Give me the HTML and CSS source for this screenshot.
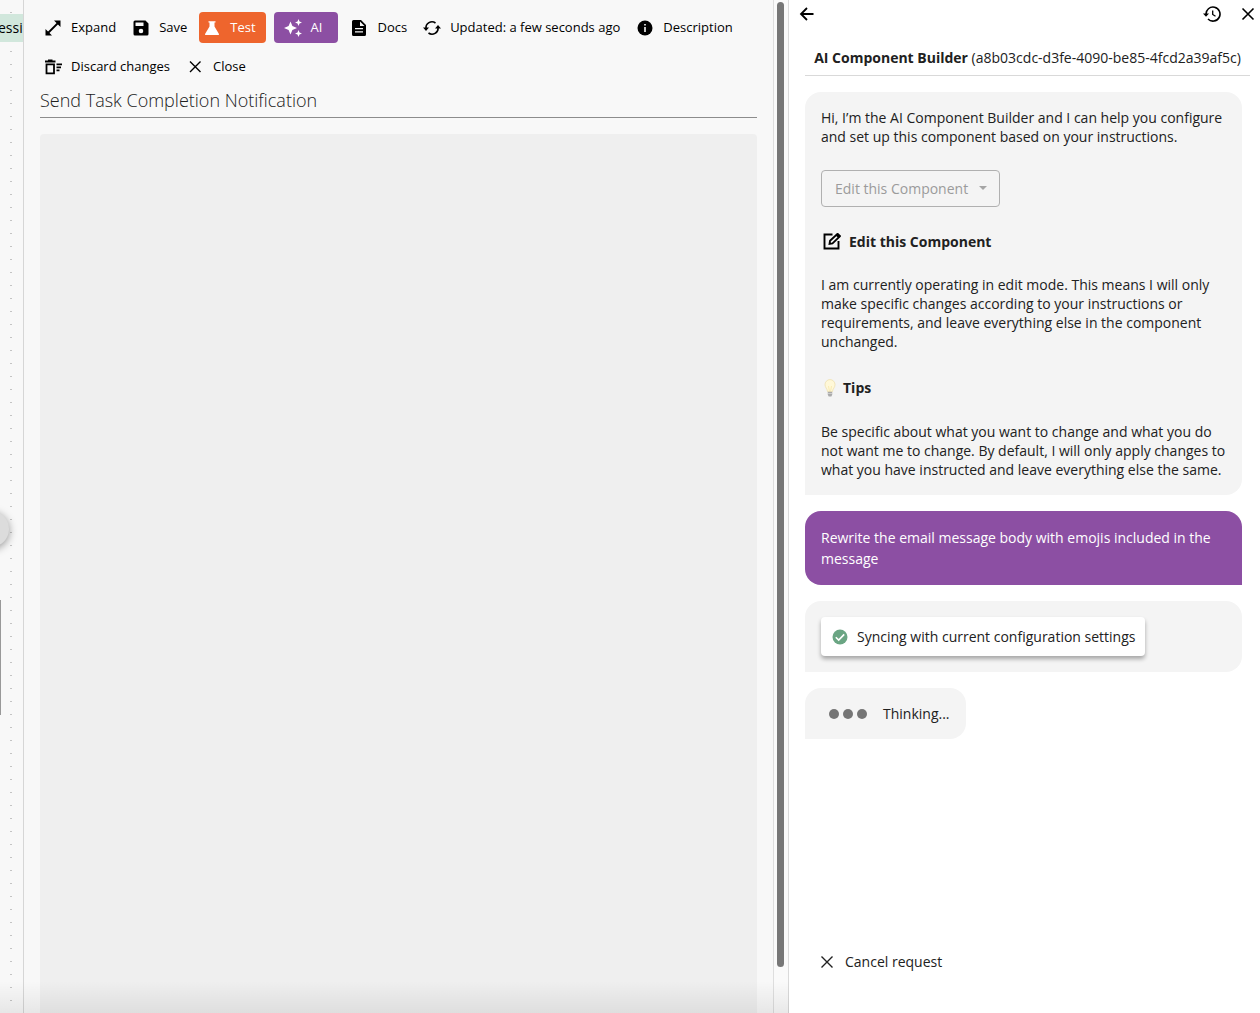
FILE: index.html
```html
<!DOCTYPE html>
<html lang="en">
<head>
<meta charset="utf-8">
<meta name="viewport" content="width=device-width, initial-scale=1">
<title>Component editor</title>
<link rel="stylesheet" href="styles.css">
</head>
<body>
<div class="app">
  <aside class="canvas" aria-label="Canvas">
    <div class="node-tag">essio</div>
    <div class="canvas-knob"></div>
    <div class="canvas-node"></div>
  </aside>

  <main class="editor">
    <div class="toolbar">
      <button class="tool" type="button">
        <svg class="icon" viewBox="0 0 18 18"><path d="M10 1.500h6.500V8zM1.500 10v6.500H8z" fill="currentColor"/><path d="M3.500 14.500l11-11" stroke="currentColor" stroke-width="1.800"/></svg>
        Expand
      </button>
      <button class="tool" type="button">
        <svg class="icon" viewBox="0 0 18 18"><path fill="currentColor" fill-rule="evenodd" d="M3 1.500h10.500l3 3v10.500a1.500 1.500 0 0 1-1.500 1.500H3a1.500 1.500 0 0 1-1.500-1.500V3A1.500 1.500 0 0 1 3 1.500zM3.500 3.500v3.500h8V3.500zM9 9.700a2.300 2.300 0 1 0 0 4.600 2.300 2.300 0 0 0 0-4.600z"/></svg>
        Save
      </button>
      <button class="tool tool-test" type="button">
        <svg class="icon" viewBox="0 0 18 18"><path fill="currentColor" d="M5.500 2.300h7v1.300h-1v4l4.300 7.100c.4.700.1 1.300-.7 1.300H2.900c-.8 0-1.100-.6-.7-1.300l4.300-7.100v-4h-1z"/></svg>
        Test
      </button>
      <button class="tool tool-ai" type="button">
        <svg class="icon" viewBox="0 0 18 18"><path fill="currentColor" d="M6.500 2.500l1.900 4.600L13 9l-4.600 1.900L6.500 15.500l-1.900-4.600L0 9l4.600-1.900zM14.500 0l1 2.500 2.500 1-2.500 1-1 2.500-1-2.500-2.500-1 2.500-1zM14.500 11l1 2.500 2.500 1-2.500 1-1 2.500-1-2.500-2.500-1 2.500-1z"/></svg>
        AI
      </button>
      <button class="tool" type="button">
        <svg class="icon" viewBox="0 0 18 18"><path fill="currentColor" fill-rule="evenodd" d="M3.500 1H11l5 5v9.500a1.500 1.500 0 0 1-1.500 1.500h-11A1.500 1.500 0 0 1 2 15.500v-13A1.500 1.500 0 0 1 3.500 1zM10 2.500V7h4.500zM5 9v1.300h8V9zM5 12.300v1.300h8v-1.300z"/></svg>
        Docs
      </button>
      <button class="tool" type="button">
        <svg class="icon" viewBox="0 0 18 18"><g fill="none" stroke="currentColor" stroke-width="1.600"><path d="M3 9.500A6 6 0 0 1 12.500 4M15 8.500A6 6 0 0 1 5.500 14"/></g><path fill="currentColor" d="M0 8.500h6L3 12zM12 9.500h6L15 6z"/></svg>
        Updated: a few seconds ago
      </button>
      <button class="tool" type="button">
        <svg class="icon" viewBox="0 0 18 18"><circle cx="9" cy="9" r="7.500" fill="currentColor"/><path d="M8.200 8h1.600v5H8.200zM8.200 5h1.600v1.600H8.200z" fill="#f8f8f8"/></svg>
        Description
      </button>
      <button class="tool" type="button">
        <svg class="icon" viewBox="0 0 18 18"><path fill="none" stroke="currentColor" stroke-width="1.800" d="M1 3.500h10.500M4 2.300h4.500M2.500 6.300h7.500v9H2.500zM12.500 6.300H18M12.500 9.300H17M12.500 12.300H15.500"/></svg>
        Discard changes
      </button>
      <button class="tool" type="button">
        <svg class="icon" viewBox="0 0 18 18"><path d="M4 3.500l10.500 10.500M14.500 3.500L4 14" stroke="currentColor" stroke-width="1.400"/></svg>
        Close
      </button>
    </div>
    <input class="component-name" type="text" aria-label="Component name" value="Send Task Completion Notification">
    <div class="component-body"></div>
  </main>

  <div class="scroll-gutter"><div class="scroll-thumb"></div></div>

  <section class="assistant">
    <header class="assistant-bar">
      <button class="icon-button" type="button" aria-label="Back">
        <svg class="icon" viewBox="0 0 18 18"><path d="M15.500 9H3M9 3L3 9l6 6" fill="none" stroke="currentColor" stroke-width="1.800"/></svg>
      </button>
      <button class="icon-button bar-end" type="button" aria-label="History">
        <svg class="icon" viewBox="0 0 18 18"><path d="M3 9.500A7 7 0 1 1 5 14" fill="none" stroke="currentColor" stroke-width="1.600"/><path d="M0 8.500h6L3 11.800z" fill="currentColor"/><path d="M9.700 5.500v4l2.800 1.700" fill="none" stroke="currentColor" stroke-width="1.300"/></svg>
      </button>
      <button class="icon-button" type="button" aria-label="Close">
        <svg class="icon" viewBox="0 0 18 18"><path d="M3.500 3.500l11 11M14.500 3.500l-11 11" stroke="currentColor" stroke-width="1.600"/></svg>
      </button>
    </header>
    <h1 class="assistant-title"><strong>AI Component Builder</strong> (a8b03cdc-d3fe-4090-be85-4fcd2a39af5c)</h1>

    <div class="messages">
      <article class="bubble intro">
        <p>Hi, I’m the AI Component Builder and I can help you configure and set up this component based on your instructions.</p>
        <div class="mode">
          <select class="mode-select" aria-label="Mode" disabled><option>Edit this Component</option></select>
          <svg class="mode-caret" viewBox="0 0 8 4"><path d="M0 0h8L4 4z" fill="currentColor"/></svg>
        </div>
        <h2 class="bubble-heading">
          <svg class="icon icon-edit" viewBox="0 0 18 18"><path d="M9.500 1.500h-8v14h14V8" fill="none" stroke="currentColor" stroke-width="1.900"/><path d="M6.500 10.800l.5-3L14.300 1l2.500 2.500-7.300 6.800z" fill="none" stroke="currentColor" stroke-width="1.800"/><path d="M12.500 2.300L15 0l3 2.800-2.500 2.500z" fill="currentColor"/></svg>
          Edit this Component
        </h2>
        <p>I am currently operating in edit mode. This means I will only make specific changes according to your instructions or requirements, and leave everything else in the component unchanged.</p>
        <h2 class="bubble-heading tips">
          <svg class="icon" viewBox="0 0 18 18"><path d="M9 .6a5 5 0 0 0-5 5.200c0 2.600 2.300 3.900 2.600 7h4.800c.3-3.100 2.600-4.400 2.600-7A5 5 0 0 0 9 .6z" fill="#fff8d8" stroke="#eee0ae" stroke-width=".8"/><path d="M7.500 7l1 5.500M10.500 7l-1 5.500" stroke="#f3e09a" stroke-width=".6"/><path d="M6.800 12.800h4.400v3L10.300 17.500H7.700L6.800 15.800z" fill="#aaa"/><path d="M6.800 14.500h4.400" stroke="#ddd" stroke-width=".7"/></svg>
          Tips
        </h2>
        <p>Be specific about what you want to change and what you do not want me to change. By default, I will only apply changes to what you have instructed and leave everything else the same.</p>
      </article>

      <article class="bubble bubble-user">Rewrite the email message body with emojis included in the message</article>

      <article class="bubble">
        <div class="status-card">
          <svg class="icon" viewBox="0 0 18 18"><circle cx="9" cy="9" r="7.500" fill="#6aa583"/><path d="M4.800 9.200l2.900 2.900 5.500-5.700" fill="none" stroke="#fff" stroke-width="1.600"/></svg>
          Syncing with current configuration settings
        </div>
      </article>

      <article class="bubble thinking">
        <span class="dots"><i></i><i></i><i></i></span>
        Thinking...
      </article>
    </div>

    <footer class="assistant-footer">
      <button class="tool cancel" type="button">
        <svg class="icon" viewBox="0 0 18 18"><path d="M3.500 3.500l11 11M14.500 3.500l-11 11" stroke="currentColor" stroke-width="1.400"/></svg>
        Cancel request
      </button>
    </footer>
  </section>
</div>
</body>
</html>
```
FILE: styles.css
```css
* { box-sizing: border-box; }

body {
  margin: 0;
  font: 14px/19px "Open Sans", "Noto Sans", sans-serif;
  color: #212121;
  background: #fff;
}

.app {
  position: relative;
  display: grid;
  grid-template-columns: 24px minmax(0, 1fr) 15px 471px;
  min-height: 100vh;
}

/* Soft shade along the bottom edge, left of the assistant */
.app::after {
  content: "";
  position: absolute;
  right: 471px;
  bottom: 0;
  left: 0;
  height: 32px;
  background: linear-gradient(transparent, rgba(0, 0, 0, .07));
  pointer-events: none;
}

button {
  border: 0;
  padding: 0;
  background: none;
  font: inherit;
  color: #000;
}

.icon {
  width: 18px;
  height: 18px;
  flex: none;
}

/* Canvas strip */
.canvas {
  position: relative;
  overflow: hidden;
  border-right: 1px solid #d6d6d6;
  background: #f8f8f8 conic-gradient(from 90deg at 11px 12px, #c4c4c4 25%, transparent 0) 12px 0 / 13px 13px;
}

.node-tag {
  position: absolute;
  top: 14px;
  left: 0;
  padding: 4px 0;
  width: 100%;
  background: #d1e7dc;
  color: #000;
  line-height: 20px;
  text-indent: -2px;
}

.canvas-knob {
  position: absolute;
  top: 511px;
  left: -27px;
  width: 36px;
  height: 36px;
  border-radius: 50%;
  background: #dcdcdc;
  box-shadow: 0 2px 8px rgba(0, 0, 0, .4);
}

.canvas-node {
  position: absolute;
  top: 600px;
  left: 0;
  width: 1px;
  height: 115px;
  background: #999;
}

/* Editor */
.editor {
  display: flex;
  flex-direction: column;
  padding: 12px 16px 0;
  border-right: 1px solid #dedede;
  background: #f8f8f8;
}

.toolbar {
  display: flex;
  flex-wrap: wrap;
  gap: 8px;
}

.tool {
  display: flex;
  align-items: center;
  gap: 9px;
  height: 31px;
  padding: 0 4px;
  border-radius: 4px;
  font-size: 13px;
  white-space: nowrap;
}

.tool-test {
  padding-right: 10px;
  background: #ee652d;
  color: #fff;
  font-weight: 500;
}

.tool-ai {
  padding: 0 16px 0 10px;
  background: #8c4fa3;
  color: #fff;
  font-weight: 500;
}

.component-name {
  height: 36px;
  padding: 0;
  border: 0;
  border-bottom: 1px solid #8c8c8c;
  background: none;
  font: 300 18px/24px "Open Sans", "Noto Sans", sans-serif;
  color: #212121;
}

.component-body {
  flex: 1;
  margin-top: 16px;
  border-radius: 4px 4px 0 0;
  background: #efefef;
}

.scroll-gutter {
  display: flex;
  padding: 2px 4px 46px 3px;
  border-right: 1px solid #dadada;
  background: #fafafa;
}

.scroll-thumb {
  flex: 1;
  border-radius: 4px;
  background: #777;
}

/* Assistant */
.assistant {
  display: flex;
  flex-direction: column;
}

.assistant-bar {
  display: flex;
  align-items: center;
  gap: 18px;
  height: 28px;
  padding: 0 3px 0 9px;
}

.bar-end { margin-left: auto; }

.icon-button {
  display: flex;
}

.assistant-title {
  margin: 20px 10px 0 16px;
  padding-bottom: 8px;
  border-bottom: 1px solid #d9d9d9;
  font-size: 14px;
  font-weight: 400;
  line-height: 19px;
  text-align: center;
  white-space: nowrap;
}

.messages {
  display: flex;
  flex-direction: column;
  gap: 16px;
  padding: 16px 18px 0 16px;
}

.bubble {
  padding: 16px;
  border-radius: 16px 16px 16px 0;
  background: #f4f4f4;
}

.bubble p { margin: 0; }

.mode {
  position: relative;
  width: 179px;
  margin: 24px 0;
}

.mode-select {
  display: block;
  appearance: none;
  width: 100%;
  height: 37px;
  padding: 0 13px;
  border: 1px solid #b0b0b0;
  border-radius: 4px;
  background: none;
  font: inherit;
  color: #9b9b9b;
  opacity: 1;
}

.mode-caret {
  position: absolute;
  top: 16px;
  right: 13px;
  width: 8px;
  height: 4px;
  color: #a5a5a5;
}

.bubble-heading {
  display: flex;
  align-items: center;
  gap: 8px;
  margin: 0 0 23px;
  font-size: 14px;
  font-weight: 700;
  line-height: 21px;
}

.icon-edit {
  margin-left: 2px;
  color: #000;
}

.tips {
  gap: 4px;
  margin: 26px 0 24px;
}

.bubble-user {
  border-radius: 16px 16px 0 16px;
  background: #8c4fa3;
  color: #fff;
  font-weight: 500;
  line-height: 21px;
}

.status-card {
  display: flex;
  align-items: center;
  gap: 8px;
  width: fit-content;
  padding: 10px;
  border-radius: 4px;
  background: #fff;
  box-shadow: 0 3px 4px rgba(0, 0, 0, .32);
}

.thinking {
  display: flex;
  align-items: center;
  gap: 16px;
  width: fit-content;
  padding-left: 24px;
}

.dots {
  display: flex;
  gap: 4px;
}

.dots i {
  width: 10px;
  height: 10px;
  border-radius: 50%;
  background: #757575;
}

.assistant-footer {
  margin-top: auto;
  padding: 16px 25px 36px;
}

.cancel {
  font-size: 14px;
  color: #212121;
}
```
